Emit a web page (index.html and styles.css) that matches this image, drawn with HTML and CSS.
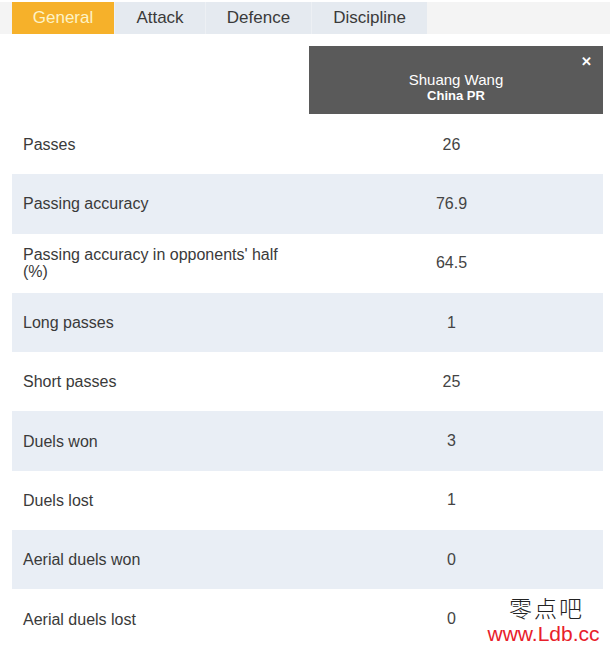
FILE: index.html
```html
<!DOCTYPE html>
<html>
<head>
<meta charset="utf-8">
<link rel="stylesheet" href="styles.css">
</head>
<body>
<div class="page">
  <div class="tabs">
    <div class="tab active">General</div>
    <div class="tab">Attack</div>
    <div class="tab">Defence</div>
    <div class="tab">Discipline</div>
  </div>
  <div class="content">
    <div class="head">
      <div class="head-spacer"></div>
      <div class="player">
        <span class="close">&#10005;</span>
        <div class="pname">Shuang Wang</div>
        <div class="pteam">China PR</div>
      </div>
    </div>
    <div class="row"><div class="label">Passes</div><div class="val">26</div></div>
    <div class="row alt"><div class="label">Passing accuracy</div><div class="val">76.9</div></div>
    <div class="row"><div class="label">Passing accuracy in opponents' half (%)</div><div class="val">64.5</div></div>
    <div class="row alt"><div class="label">Long passes</div><div class="val">1</div></div>
    <div class="row"><div class="label">Short passes</div><div class="val">25</div></div>
    <div class="row alt"><div class="label">Duels won</div><div class="val">3</div></div>
    <div class="row"><div class="label">Duels lost</div><div class="val">1</div></div>
    <div class="row alt"><div class="label">Aerial duels won</div><div class="val">0</div></div>
    <div class="row"><div class="label">Aerial duels lost</div><div class="val">0</div></div>
  </div>
  <div class="watermark">
    <div class="wm-cn">零点吧</div>
    <div class="wm-url">www.Ldb.cc</div>
  </div>
</div>
</body>
</html>
```
FILE: styles.css
```css
html, body {
  margin: 0;
  padding: 0;
  background: #ffffff;
}
body {
  font-family: "Liberation Sans", Arial, sans-serif;
  color: #3a3a3a;
}
.page {
  position: relative;
  width: 610px;
  height: 648px;
  overflow: hidden;
}
.tabs {
  display: flex;
  margin-top: 2px;
  height: 32px;
  background: #f4f4f4;
  padding-left: 12px;
}
.tab {
  display: flex;
  align-items: center;
  justify-content: center;
  background: #e5eaf0;
  color: #3a3a3a;
  font-size: 17px;
  border-right: 1px solid #edf0f4;
}
.tab:nth-child(1) { width: 102px; }
.tab:nth-child(2) { width: 90px; }
.tab:nth-child(3) { width: 105px; }
.tab:nth-child(4) { width: 115px; border-right: none; }
.tab.active {
  background: #f6b12a;
  color: #fdf3c6;
}
.content {
  margin-left: 12px;
  width: 591px;
}
.head {
  display: flex;
  margin-top: 12px;
  height: 68px;
}
.head-spacer {
  width: 297px;
}
.player {
  position: relative;
  flex: 1;
  background: #5a5a5a;
  color: #ffffff;
  display: flex;
  flex-direction: column;
  align-items: center;
  justify-content: center;
  padding-top: 13px;
  box-sizing: border-box;
}
.pname {
  font-size: 15px;
  line-height: 17px;
}
.pteam {
  font-size: 13px;
  font-weight: bold;
  line-height: 15px;
}
.close {
  position: absolute;
  top: 8px;
  right: 11px;
  font-size: 13px;
  font-weight: bold;
  color: #ffffff;
}
.row {
  display: flex;
  align-items: center;
  height: 59.3px;
  font-size: 16px;
}
.row:nth-of-type(2) { margin-top: 1px; }
.row.alt {
  background: #e9eef5;
}
.label {
  width: 288px;
  box-sizing: border-box;
  padding-left: 11px;
  padding-right: 10px;
  line-height: 17px;
}
.val {
  flex: 1;
  text-align: center;
  color: #444444;
}
.watermark {
  position: absolute;
  left: 483px;
  top: 590px;
  width: 121px;
  text-align: center;
}
.wm-cn {
  font-family: "Noto Sans CJK SC", sans-serif;
  font-weight: 300;
  font-size: 23px;
  line-height: 35px;
  height: 33px;
  color: #222222;
  letter-spacing: 2px;
  padding-left: 6px;
}
.wm-url {
  font-family: "Liberation Sans", Arial, sans-serif;
  font-size: 21px;
  line-height: 22px;
  color: #e8202a;
}
```
